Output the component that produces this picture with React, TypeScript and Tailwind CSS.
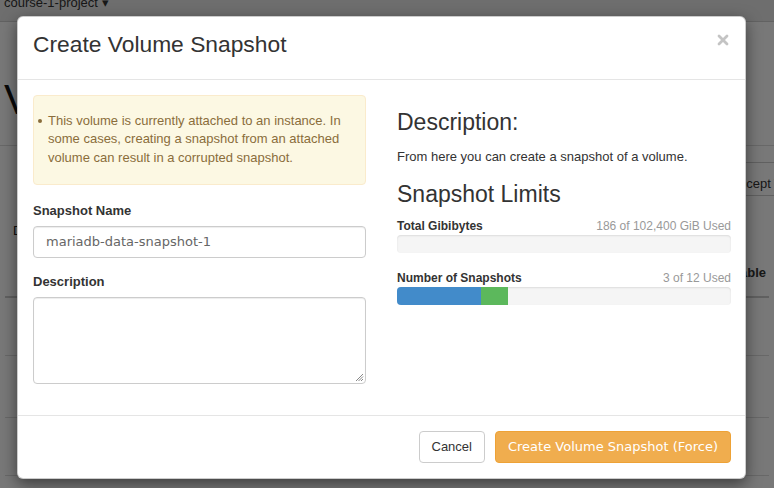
import { X } from 'lucide-react'

const SANS = "font-['Liberation_Sans',Arial,sans-serif]"
const DEJAVU = "font-['DejaVu_Sans',sans-serif]"

// Page behind the backdrop — only the edges are visible
function PageBehind() {
  return (
    <div className="flex flex-col">
      <nav className="h-[22px] bg-[#e9e9e9] border-b border-[#d0d0d0] flex items-start px-[4px]">
        <span className="-mt-[6px] text-[13px] leading-[18px] text-[#333]">course-1-project ▾</span>
      </nav>
      <div className="h-[124px] border-b border-[#ddd] flex items-start px-[4px]">
        <h1 className="mt-[54px] text-[42px] leading-[48px] text-[#111]">Volumes</h1>
      </div>
      <div className="h-[70px] flex items-start justify-end pt-[16px]">
        <div className="h-[34px] w-[120px] -mr-[77px] shrink-0 border-y border-[#ccc] flex items-end pb-[2px] text-[13px] whitespace-nowrap">
          Accept Transfer
        </div>
      </div>
      <div className="px-[5px]">
        <div className="h-[30px] px-[8px] flex items-center text-[13px] text-[#222]">Displaying 3 items</div>
        <div className="h-[52px] border-b-2 border-[#ccc] flex items-end justify-end pb-[14px] pr-[3px] text-[13px] font-bold">
          <span>Bootable</span>
        </div>
        <div className="h-[58px] border-b border-[#ddd]" />
        <div className="h-[62px] border-b border-[#ddd]" />
        <div className="h-[58px] border-b border-[#ddd]" />
      </div>
    </div>
  )
}

function ProgressRow({ label, used, bars }: { label: string; used: string; bars: { pct: number; color: string }[] }) {
  return (
    <div>
      <div className="flex items-center justify-between text-[12px] leading-[17px]">
        <span className="font-bold text-[#333]">{label}</span>
        <span className="text-[#999]">{used}</span>
      </div>
      <div className="h-[18px] rounded-[4px] bg-[#f5f5f5] shadow-[inset_0_1px_2px_rgba(0,0,0,0.1)] overflow-hidden flex">
        {bars.map((b, i) => (
          <div key={i} className={`h-full ${b.color}`} style={{ width: `${b.pct}%` }} />
        ))}
      </div>
    </div>
  )
}

export default function App() {
  return (
    <div className={`relative w-[774px] h-[488px] overflow-hidden bg-white text-[#333] ${SANS}`}>
      <PageBehind />

      {/* backdrop */}
      <div className="absolute inset-0 bg-black/[0.53]" />

      {/* modal */}
      <div className="absolute left-[17px] top-[16px] w-[729px] bg-white rounded-[6px] border border-black/20 shadow-[0_5px_15px_rgba(0,0,0,0.5)]">
        <div className="h-[63px] border-b border-[#e5e5e5] flex items-start justify-between pl-[15px] pr-[14px]">
          <h4 className="mt-[15px] text-[22.8px] leading-[1.1] text-[#333]">Create Volume Snapshot</h4>
          <button className="mt-[15px] w-[16px] h-[16px] flex items-center justify-center text-[#c4c4c4]">
            <X size={18} strokeWidth={4.2} />
          </button>
        </div>

        <div className="pt-[15px] pb-[31px] pl-[15px] pr-[14px] grid grid-cols-[333px_334px] gap-x-[31px]">
          {/* left column */}
          <div>
            <div className="rounded-[4px] border border-[#faebcc] bg-[#fcf8e3] text-[#8a6d3b] text-[13px] leading-[18.5px] pt-[15.5px] pb-[16.5px] pl-[4px] pr-[14px]">
              <div className="flex gap-[6px]">
                <span className="mt-[7.5px] w-[4px] h-[4px] rounded-full bg-[#8a6d3b] shrink-0" />
                <span>
                  This volume is currently attached to an instance. In some cases, creating a snapshot from an attached
                  volume can result in a corrupted snapshot.
                </span>
              </div>
            </div>

            <label className="block mt-[17px] mb-[6px] text-[13px] leading-[18.5px] font-bold">Snapshot Name</label>
            <div className={`h-[32px] rounded-[4px] border border-[#ccc] shadow-[inset_0_1px_1px_rgba(0,0,0,0.075)] flex items-center px-[12px] text-[13px] text-[#666] ${DEJAVU}`}>
              mariadb-data-snapshot-1
            </div>

            <label className="block mt-[14.5px] mb-[6px] text-[13px] leading-[18.5px] font-bold">Description</label>
            <div className="relative h-[87px] rounded-[4px] border border-[#ccc] shadow-[inset_0_1px_1px_rgba(0,0,0,0.075)]">
              <svg className="absolute right-[1px] bottom-[1px]" width="10" height="10" viewBox="0 0 10 10">
                <path d="M9 2 L2 9 M9 4.5 L4.5 9 M9 7 L7 9" stroke="#888" strokeWidth="1" />
              </svg>
            </div>
          </div>

          {/* right column */}
          <div>
            <h3 className="mt-[15px] text-[23px] leading-[1.1] text-[#333]">Description:</h3>
            <p className="mt-[12.5px] text-[13px] leading-[18.5px]">From here you can create a snapshot of a volume.</p>
            <h3 className="mt-[15.5px] text-[23px] leading-[1.1] text-[#333]">Snapshot Limits</h3>
            <div className="mt-[11px]">
              <ProgressRow label="Total Gibibytes" used="186 of 102,400 GiB Used" bars={[]} />
            </div>
            <div className="mt-[17px]">
              <ProgressRow
                label="Number of Snapshots"
                used="3 of 12 Used"
                bars={[
                  { pct: 25, color: 'bg-[#428bca]' },
                  { pct: 8.2, color: 'bg-[#5cb85c]' },
                ]}
              />
            </div>
          </div>
        </div>

        <div className="border-t border-[#e5e5e5] pt-[15px] pb-[15px] pl-[15px] pr-[14px] flex justify-end gap-[10px]">
          <button className="h-[32px] px-[12px] rounded-[4px] border border-[#ccc] bg-white text-[13px] text-[#333]">
            Cancel
          </button>
          <button className={`h-[32px] px-[12px] rounded-[4px] border border-[#eea236] bg-[#f0ad4e] text-[13px] text-white ${DEJAVU}`}>
            Create Volume Snapshot (Force)
          </button>
        </div>
      </div>
    </div>
  )
}
